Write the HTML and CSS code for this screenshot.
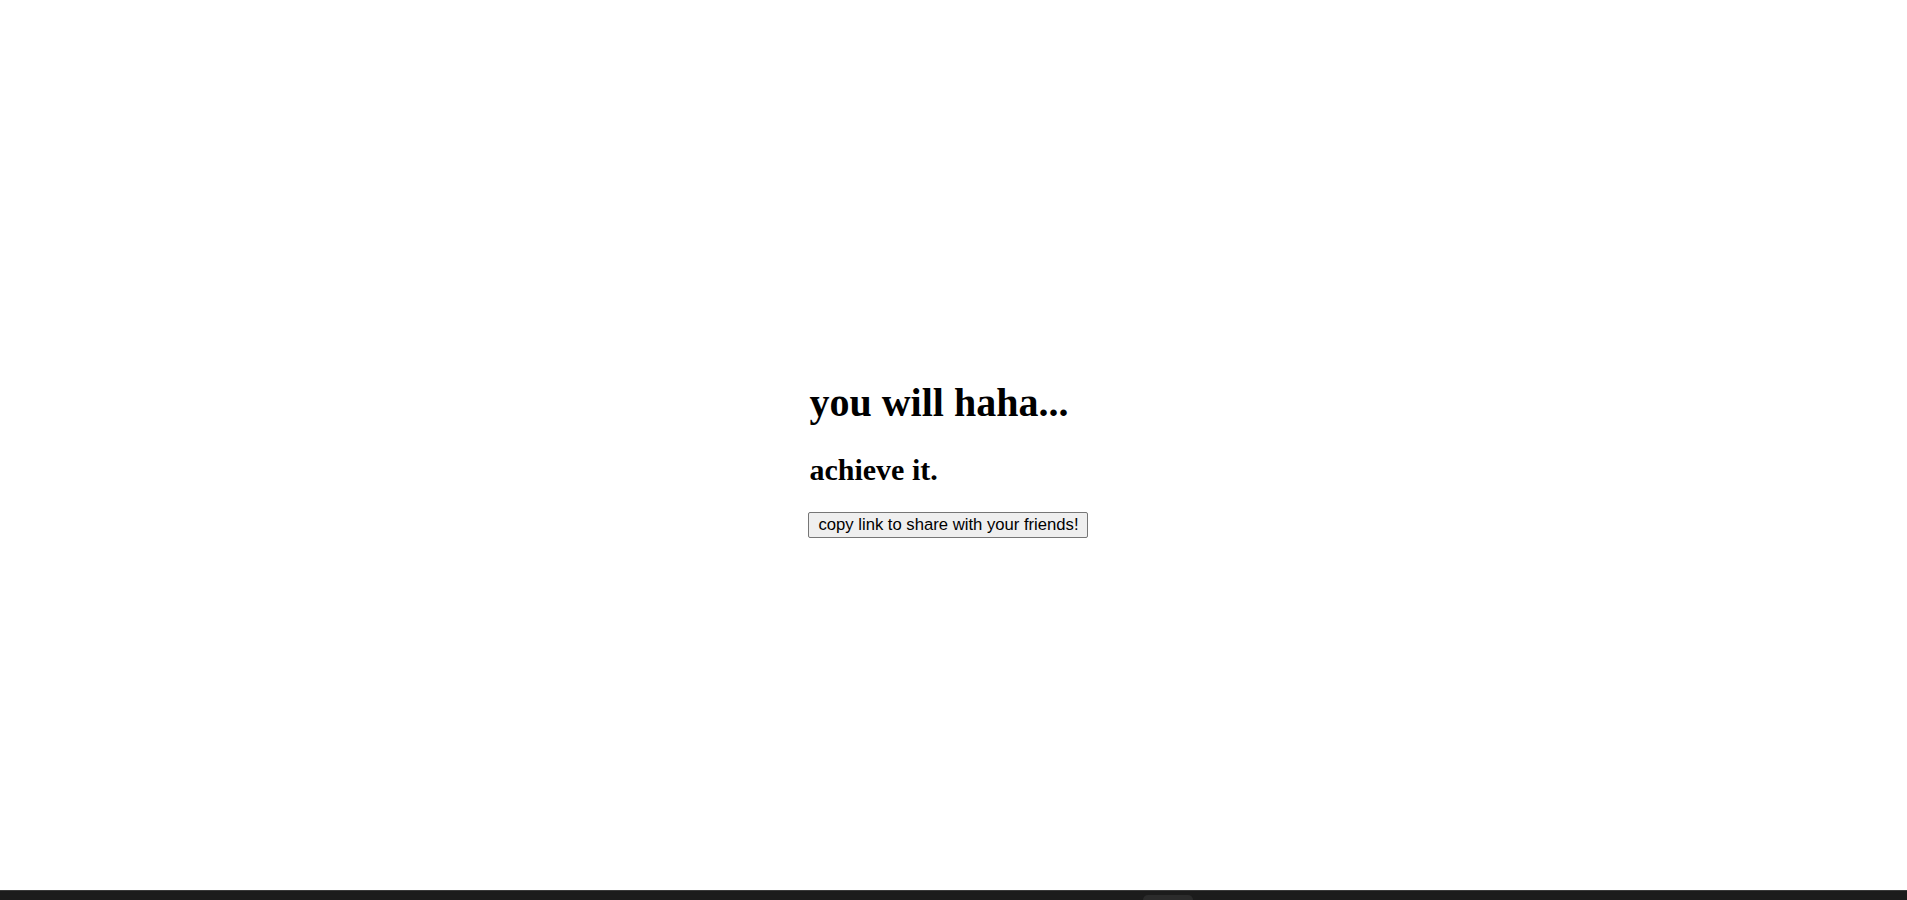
FILE: index.html
```html
<!DOCTYPE html>
<html>
<head>
<meta charset="utf-8">
<link rel="stylesheet" href="styles.css">
</head>
<body>
<main class="page">
  <div class="content">
    <h1 class="title">you will haha...</h1>
    <h2 class="subtitle">achieve it.</h2>
    <button class="share">copy link to share with your friends!</button>
  </div>
</main>
<footer class="bar"><span class="tab"></span></footer>
</body>
</html>
```
FILE: styles.css
```css
html, body {
  margin: 0;
  padding: 0;
  background: #ffffff;
}
body {
  width: 1907px;
  height: 900px;
  overflow: hidden;
  display: flex;
  flex-direction: column;
  font-family: "Liberation Serif", "Times New Roman", serif;
}
.page {
  height: 890px;
  display: flex;
  align-items: center;
  justify-content: center;
}
.content {
  display: flex;
  flex-direction: column;
  align-items: flex-start;
  margin-left: -11px;
  margin-top: 27px;
}
.title {
  font-size: 40px;
  font-weight: bold;
  margin: 0 0 27px 1px;
  line-height: 46px;
  color: #000;
}
.subtitle {
  font-size: 30px;
  font-weight: bold;
  margin: 0 0 25px 1px;
  line-height: 34px;
  color: #000;
}
.share {
  font-family: "Liberation Sans", Arial, sans-serif;
  font-size: 16.67px;
  line-height: 19px;
  padding: 1px 8px 1px 9px;
  border: 1px solid #767676;
  border-radius: 2px;
  background: #efefef;
  color: #000;
  height: 26px;
}
.bar {
  height: 10px;
  background: #1c1c1c;
  border-top: 1px solid #3a3a3a;
  box-sizing: border-box;
  position: relative;
}
.tab {
  position: absolute;
  left: 1143px;
  top: 4px;
  width: 50px;
  height: 6px;
  background: #2b2b2b;
  border-radius: 5px 5px 0 0;
}
```
